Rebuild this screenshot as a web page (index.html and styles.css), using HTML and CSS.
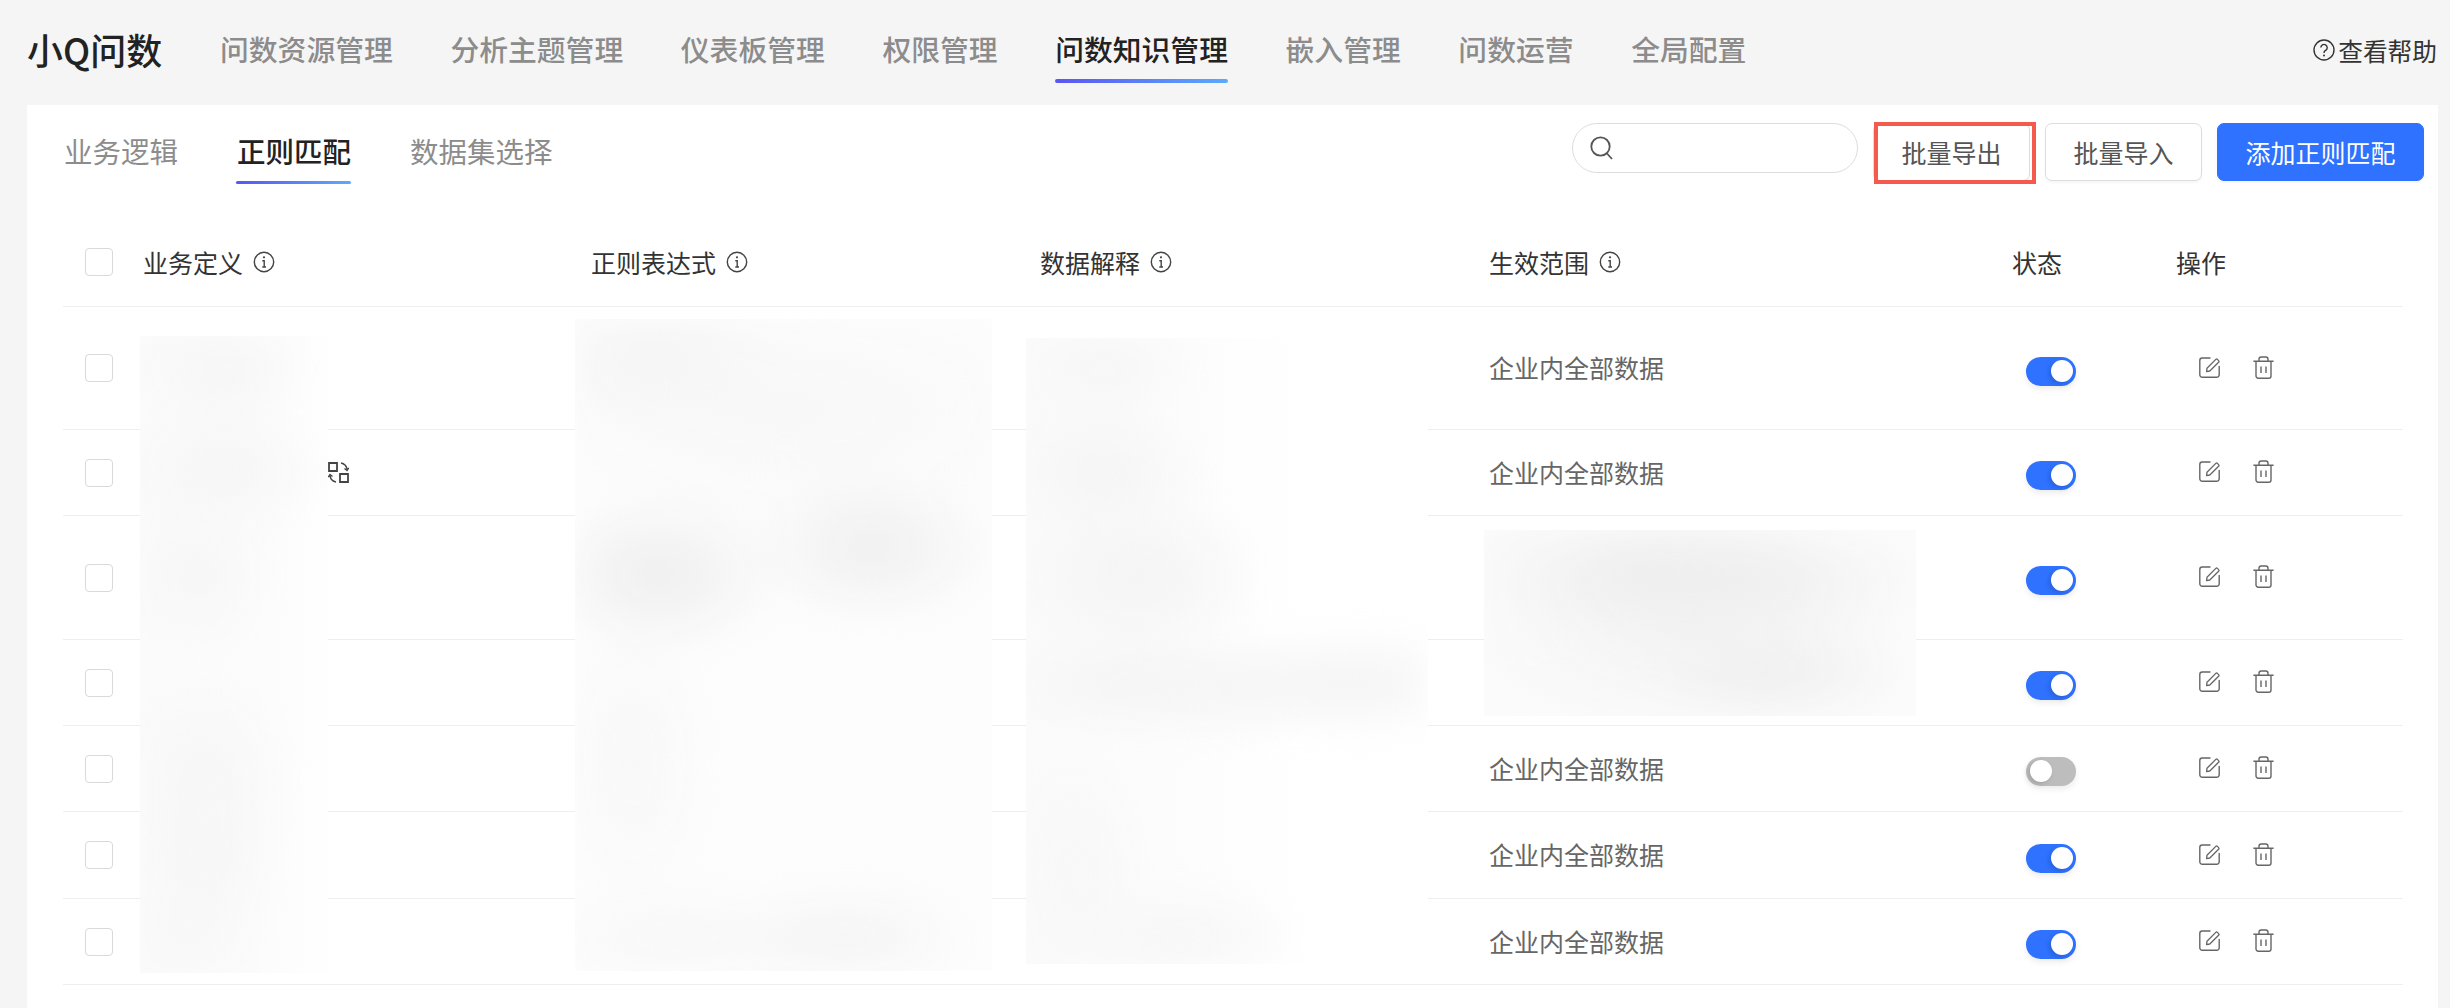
FILE: index.html
```html
<!DOCTYPE html>
<html lang="zh-CN">
<head>
    <meta charset="UTF-8">
    <title>小Q问数</title>
    <link rel="stylesheet" href="styles.css">
</head>
<body>
    <svg class="icon-defs" aria-hidden="true">
        <symbol id="icon-info" viewBox="0 0 22 22">
            <circle cx="11" cy="11" r="9.7" fill="none" stroke="currentColor" stroke-width="1.4"/>
            <path d="M9.3 9.7H11.2V16M9.3 16H13" fill="none" stroke="currentColor" stroke-width="1.4"/>
            <circle cx="11" cy="6.3" r="1.1" fill="currentColor"/>
        </symbol>
        <symbol id="icon-edit" viewBox="0 0 21 21">
            <path d="M11 1H3.2A2.5 2.5 0 0 0 .8 3.5V17.8A2.4 2.4 0 0 0 3.2 20.2H17.8A2.4 2.4 0 0 0 20.2 17.8V9.5" fill="none" stroke="currentColor" stroke-width="1.4" stroke-linecap="round"/>
            <path d="M8 11.2L16.8 2.4Q17.6 1.6 18.4 2.4L19.6 3.6Q20.4 4.4 19.6 5.2L10.8 14L7.6 14.6Z" fill="none" stroke="currentColor" stroke-width="1.3" stroke-linejoin="round"/>
        </symbol>
        <symbol id="icon-trash" viewBox="0 0 21 23">
            <path d="M.4 5.2H20.6M6 5V3.2A2.2 2.2 0 0 1 8.2 1H12.8A2.2 2.2 0 0 1 15 3.2V5M3 5.2V20A2.2 2.2 0 0 0 5.2 22.2H15.8A2.2 2.2 0 0 0 18 20V5.2M8 10.5V17M13 10.5V17" fill="none" stroke="currentColor" stroke-width="1.4"/>
        </symbol>
    </svg>

    <header class="topbar">
        <div class="brand">小Q问数</div>
        <nav class="main-nav">
            <a class="nav-item">问数资源管理</a>
            <a class="nav-item">分析主题管理</a>
            <a class="nav-item">仪表板管理</a>
            <a class="nav-item">权限管理</a>
            <a class="nav-item active">问数知识管理</a>
            <a class="nav-item">嵌入管理</a>
            <a class="nav-item">问数运营</a>
            <a class="nav-item">全局配置</a>
        </nav>
        <a class="help-link">
            <svg class="help-icon" viewBox="0 0 22 22">
                <circle cx="11" cy="11" r="10" fill="none" stroke="currentColor" stroke-width="1.4"/>
                <path d="M7.8 8.6A3.2 3.2 0 1 1 12.6 11.4Q11 12.3 11 14" fill="none" stroke="currentColor" stroke-width="1.4"/>
                <circle cx="11" cy="16.6" r="1" fill="currentColor"/>
            </svg>
            查看帮助
        </a>
    </header>

    <main class="card">
        <div class="toolbar">
            <div class="tabs">
                <a class="tab">业务逻辑</a>
                <a class="tab active">正则匹配</a>
                <a class="tab">数据集选择</a>
            </div>
            <div class="actions">
                <div class="search">
                    <svg class="search-icon" viewBox="0 0 24 24">
                        <circle cx="10.5" cy="10.5" r="9.2" fill="none" stroke="currentColor" stroke-width="1.8"/>
                        <path d="M17 17.5L22 23" fill="none" stroke="currentColor" stroke-width="1.8"/>
                    </svg>
                </div>
                <button class="btn marked">批量导出</button>
                <button class="btn">批量导入</button>
                <button class="btn primary">添加正则匹配</button>
            </div>
        </div>

        <div class="table">
            <div class="row head">
                <div class="cell"><span class="check"></span></div>
                <div class="cell">业务定义<svg class="info"><use href="#icon-info"/></svg></div>
                <div class="cell">正则表达式<svg class="info"><use href="#icon-info"/></svg></div>
                <div class="cell">数据解释<svg class="info"><use href="#icon-info"/></svg></div>
                <div class="cell">生效范围<svg class="info"><use href="#icon-info"/></svg></div>
                <div class="cell">状态</div>
                <div class="cell">操作</div>
            </div>

            <div class="row tall">
                <div class="cell"><span class="check"></span></div>
                <div class="cell"></div><div class="cell"></div><div class="cell"></div>
                <div class="cell scope">企业内全部数据</div>
                <div class="cell"><span class="switch on"></span></div>
                <div class="cell ops"><svg class="op-edit"><use href="#icon-edit"/></svg><svg class="op-trash"><use href="#icon-trash"/></svg></div>
            </div>
            <div class="row">
                <div class="cell"><span class="check"></span></div>
                <div class="cell swap-cell">
                    <svg class="swap" viewBox="0 0 21 21">
                        <path d="M1 1H9V9H1ZM12 12H20V20H12Z" fill="none" stroke="#444" stroke-width="1.8"/>
                        <path d="M13 1Q18 2 19 7M16.5 6.5L19 8.5L20.8 5.8M8 20Q3 19 2 14M4.5 14.5L2 12.5L.2 15.2" fill="none" stroke="#444" stroke-width="1.4"/>
                    </svg>
                </div>
                <div class="cell"></div><div class="cell"></div>
                <div class="cell scope">企业内全部数据</div>
                <div class="cell"><span class="switch on"></span></div>
                <div class="cell ops"><svg class="op-edit"><use href="#icon-edit"/></svg><svg class="op-trash"><use href="#icon-trash"/></svg></div>
            </div>
            <div class="row tall-3">
                <div class="cell"><span class="check"></span></div>
                <div class="cell"></div><div class="cell"></div><div class="cell"></div><div class="cell"></div>
                <div class="cell"><span class="switch on"></span></div>
                <div class="cell ops"><svg class="op-edit"><use href="#icon-edit"/></svg><svg class="op-trash"><use href="#icon-trash"/></svg></div>
            </div>
            <div class="row">
                <div class="cell"><span class="check"></span></div>
                <div class="cell"></div><div class="cell"></div><div class="cell"></div><div class="cell"></div>
                <div class="cell"><span class="switch on"></span></div>
                <div class="cell ops"><svg class="op-edit"><use href="#icon-edit"/></svg><svg class="op-trash"><use href="#icon-trash"/></svg></div>
            </div>
            <div class="row">
                <div class="cell"><span class="check"></span></div>
                <div class="cell"></div><div class="cell"></div><div class="cell"></div>
                <div class="cell scope">企业内全部数据</div>
                <div class="cell"><span class="switch"></span></div>
                <div class="cell ops"><svg class="op-edit"><use href="#icon-edit"/></svg><svg class="op-trash"><use href="#icon-trash"/></svg></div>
            </div>
            <div class="row wide">
                <div class="cell"><span class="check"></span></div>
                <div class="cell"></div><div class="cell"></div><div class="cell"></div>
                <div class="cell scope">企业内全部数据</div>
                <div class="cell"><span class="switch on"></span></div>
                <div class="cell ops"><svg class="op-edit"><use href="#icon-edit"/></svg><svg class="op-trash"><use href="#icon-trash"/></svg></div>
            </div>
            <div class="row">
                <div class="cell"><span class="check"></span></div>
                <div class="cell"></div><div class="cell"></div><div class="cell"></div>
                <div class="cell scope">企业内全部数据</div>
                <div class="cell"><span class="switch on"></span></div>
                <div class="cell ops"><svg class="op-edit"><use href="#icon-edit"/></svg><svg class="op-trash"><use href="#icon-trash"/></svg></div>
            </div>
        </div>

        <!-- blurred-out content, lies over the table -->
        <div class="mask mask-name"></div>
        <div class="mask mask-regex"></div>
        <div class="mask mask-desc"></div>
        <div class="mask mask-scope"></div>
    </main>
</body>
</html>
```

FILE: styles.css
```css
:root {
    --primary-color: #2e72ff;
    --page-color: #f5f5f5;
    --line-color: #eeeeee;
    --text-color: #333333;
    --muted-color: #8c8c8c;
}
html, body {
    height: 100%;
}
body {
    margin: 0;
    display: flex;
    flex-direction: column;
    overflow: hidden;
    background-color: var(--page-color);
    color: var(--text-color);
    font-family: "Noto Sans CJK SC", "Noto Sans", sans-serif;
}
.icon-defs {
    display: none;
}

/* top bar */
.topbar {
    flex: none;
    height: 105px;
    display: flex;
    align-items: flex-start;
    padding: 0 13px 0 27px;
    box-sizing: border-box;
}
.brand {
    font-size: 36px;
    line-height: 98px;
    font-weight: 500;
    color: #222;
    width: 193px;
}
.main-nav {
    display: flex;
    gap: 57.6px;
}
.nav-item {
    position: relative;
    font-size: 28.8px;
    line-height: 98px;
    font-weight: 500;
    color: var(--muted-color);
}
.nav-item.active {
    color: #222;
}
.nav-item.active::after {
    content: "";
    position: absolute;
    left: 0;
    right: 0;
    top: 79px;
    height: 4px;
    border-radius: 2px;
    background: linear-gradient(90deg, #5a55f5, #5aabfb);
}
.help-link {
    margin-left: auto;
    display: flex;
    align-items: center;
    height: 100px;
    font-size: 24.7px;
    color: var(--text-color);
}
.help-icon {
    width: 22px;
    height: 22px;
    margin-right: 3px;
}

/* card */
.card {
    position: relative;
    flex: 1;
    margin: 0 12px 0 27px;
    background-color: white;
}
.toolbar {
    display: flex;
    justify-content: space-between;
    padding: 18px 14px 0 37px;
}
.tabs {
    display: flex;
    gap: 59px;
}
.tab {
    position: relative;
    height: 58px;
    font-size: 28.5px;
    line-height: 56px;
    color: var(--muted-color);
}
.tab.active {
    color: #222;
    font-weight: 500;
}
.tab.active::after {
    content: "";
    position: absolute;
    left: -1px;
    right: 0;
    top: 58px;
    height: 3px;
    border-radius: 2px;
    background: linear-gradient(90deg, #5a55f5, #5aabfb);
}
.actions {
    display: flex;
    gap: 15px;
    align-items: flex-start;
}
.search {
    width: 286px;
    height: 50px;
    box-sizing: border-box;
    border: 1.5px solid #dddddd;
    border-radius: 25px;
    display: flex;
    align-items: center;
    padding-left: 17px;
    color: #555;
}
.search-icon {
    width: 24px;
    height: 24px;
}
.btn {
    position: relative;
    width: 157px;
    height: 58px;
    box-sizing: border-box;
    background-color: white;
    border: 1.5px solid #dddddd;
    border-radius: 7px;
    box-shadow: 0 2px 3px rgba(0,0,0,0.04);
    font-family: inherit;
    font-size: 25px;
    color: #555;
    padding: 0;
}
.btn.primary {
    width: 207px;
    background-color: var(--primary-color);
    border-color: var(--primary-color);
    color: white;
}
.btn.marked::after {
    content: "";
    position: absolute;
    left: 0;
    right: -7px;
    top: -2px;
    bottom: -4px;
    border: 4px solid #f55a4e;
}

/* table */
.table {
    margin: 37px 35px 0 36px;
}
.row {
    display: grid;
    grid-template-columns: 80px 448px 449px 449px 523px 164px 1fr;
    height: 86px;
    border-bottom: 1.5px solid var(--line-color);
    box-sizing: border-box;
}
.row.head {
    height: 89px;
    color: var(--text-color);
}
.row.tall {
    height: 123px;
}
.row.tall-3 {
    height: 124px;
}
.row.wide {
    height: 87px;
}
.cell {
    display: flex;
    align-items: center;
    font-size: 25px;
    line-height: 34px;
}
.check {
    width: 28px;
    height: 28px;
    margin-left: 22px;
    box-sizing: border-box;
    border: 1.5px solid #d9d9d9;
    border-radius: 4px;
}
.info {
    width: 22px;
    height: 22px;
    margin-left: 10px;
    color: #444;
}
.scope {
    color: #666;
    padding-bottom: 2px;
}
.swap-cell {
    padding-left: 185px;
}
.swap {
    width: 21px;
    height: 21px;
}
.switch {
    position: relative;
    width: 50px;
    height: 29px;
    margin: 6px 0 0 14px;
    border-radius: 15px;
    background-color: #bdbdbd;
    box-shadow: 0 3px 6px rgba(0,0,0,0.08);
}
.switch::after {
    content: "";
    position: absolute;
    left: 4px;
    top: 3px;
    width: 22px;
    height: 22px;
    border-radius: 50%;
    background-color: white;
    box-shadow: -2px 2px 5px rgba(0,0,0,0.15);
}
.switch.on {
    background-color: var(--primary-color);
}
.switch.on::after {
    left: 25px;
}
.ops {
    color: #666;
    padding: 0 0 2px 23px;
}
.op-edit {
    width: 21px;
    height: 21px;
    margin-right: 33px;
}
.op-trash {
    width: 21px;
    height: 23px;
}

/* blurred blocks: the gradients sit on a blurred layer, clipped by the box */
.mask {
    position: absolute;
    overflow: hidden;
}
.mask::before {
    content: "";
    position: absolute;
    inset: 0;
    filter: blur(14px);
}
.mask-name {
    left: 113px;
    top: 231px;
    width: 188px;
    height: 637px;
    background: linear-gradient(90deg, #fbfbfb, #fcfcfc 60%, #fefefe);
}
.mask-name::before {
    background:
        radial-gradient(ellipse 90px 65px at 83px 32px, #f5f5f5, transparent),
        radial-gradient(ellipse 105px 70px at 83px 134px, #f5f5f5, transparent),
        radial-gradient(ellipse 80px 80px at 57px 239px, #f6f6f6, transparent),
        radial-gradient(ellipse 90px 110px at 65px 444px, #f6f6f6, transparent),
        radial-gradient(ellipse 80px 80px at 65px 523px, #f6f6f6, transparent),
        radial-gradient(ellipse 80px 70px at 48px 594px, #f7f7f7, transparent);
}
.mask-regex {
    left: 548px;
    top: 214px;
    width: 417px;
    height: 652px;
    background: #fdfdfd;
}
.mask-regex::before {
    background:
        radial-gradient(ellipse 130px 85px at 83px 255px, #eeeeee, transparent),
        radial-gradient(ellipse 130px 80px at 297px 228px, #efefef, transparent),
        radial-gradient(ellipse 140px 75px at 75px 39px, #f4f4f4, transparent),
        radial-gradient(ellipse 300px 120px at 212px 92px, #f7f7f7, transparent),
        radial-gradient(ellipse 80px 150px at 58px 444px, #f7f7f7, transparent),
        radial-gradient(ellipse 130px 60px at 271px 620px, #f4f4f4, transparent),
        radial-gradient(ellipse 150px 60px at 100px 620px, #f7f7f7, transparent);
}
.mask-desc {
    left: 999px;
    top: 233px;
    width: 402px;
    height: 626px;
    background: linear-gradient(90deg, #fbfbfb, #fdfdfd 45%, #ffffff 70%);
}
.mask-desc::before {
    background:
        radial-gradient(ellipse 100px 70px at 77px 28px, #f6f6f6, transparent),
        radial-gradient(ellipse 110px 70px at 77px 134px, #f4f4f4, transparent),
        radial-gradient(ellipse 130px 85px at 111px 239px, #f3f3f3, transparent),
        radial-gradient(ellipse 140px 55px at 102px 345px, #f4f4f4, transparent),
        radial-gradient(ellipse 140px 60px at 333px 345px, #f4f4f4, transparent),
        radial-gradient(ellipse 140px 55px at 205px 350px, #f5f5f5, transparent),
        radial-gradient(ellipse 75px 130px at 51px 535px, #f7f7f7, transparent),
        radial-gradient(ellipse 130px 60px at 154px 601px, #f6f6f6, transparent);
}
.mask-scope {
    left: 1457px;
    top: 425px;
    width: 432px;
    height: 186px;
    background: #fbfbfb;
}
.mask-scope::before {
    background:
        radial-gradient(ellipse 190px 70px at 166px 43px, #eeeeee, transparent),
        radial-gradient(ellipse 190px 65px at 255px 50px, #efefef, transparent),
        radial-gradient(ellipse 140px 55px at 284px 143px, #efefef, transparent),
        radial-gradient(ellipse 220px 100px at 200px 100px, #f3f3f3, transparent);
}
```
